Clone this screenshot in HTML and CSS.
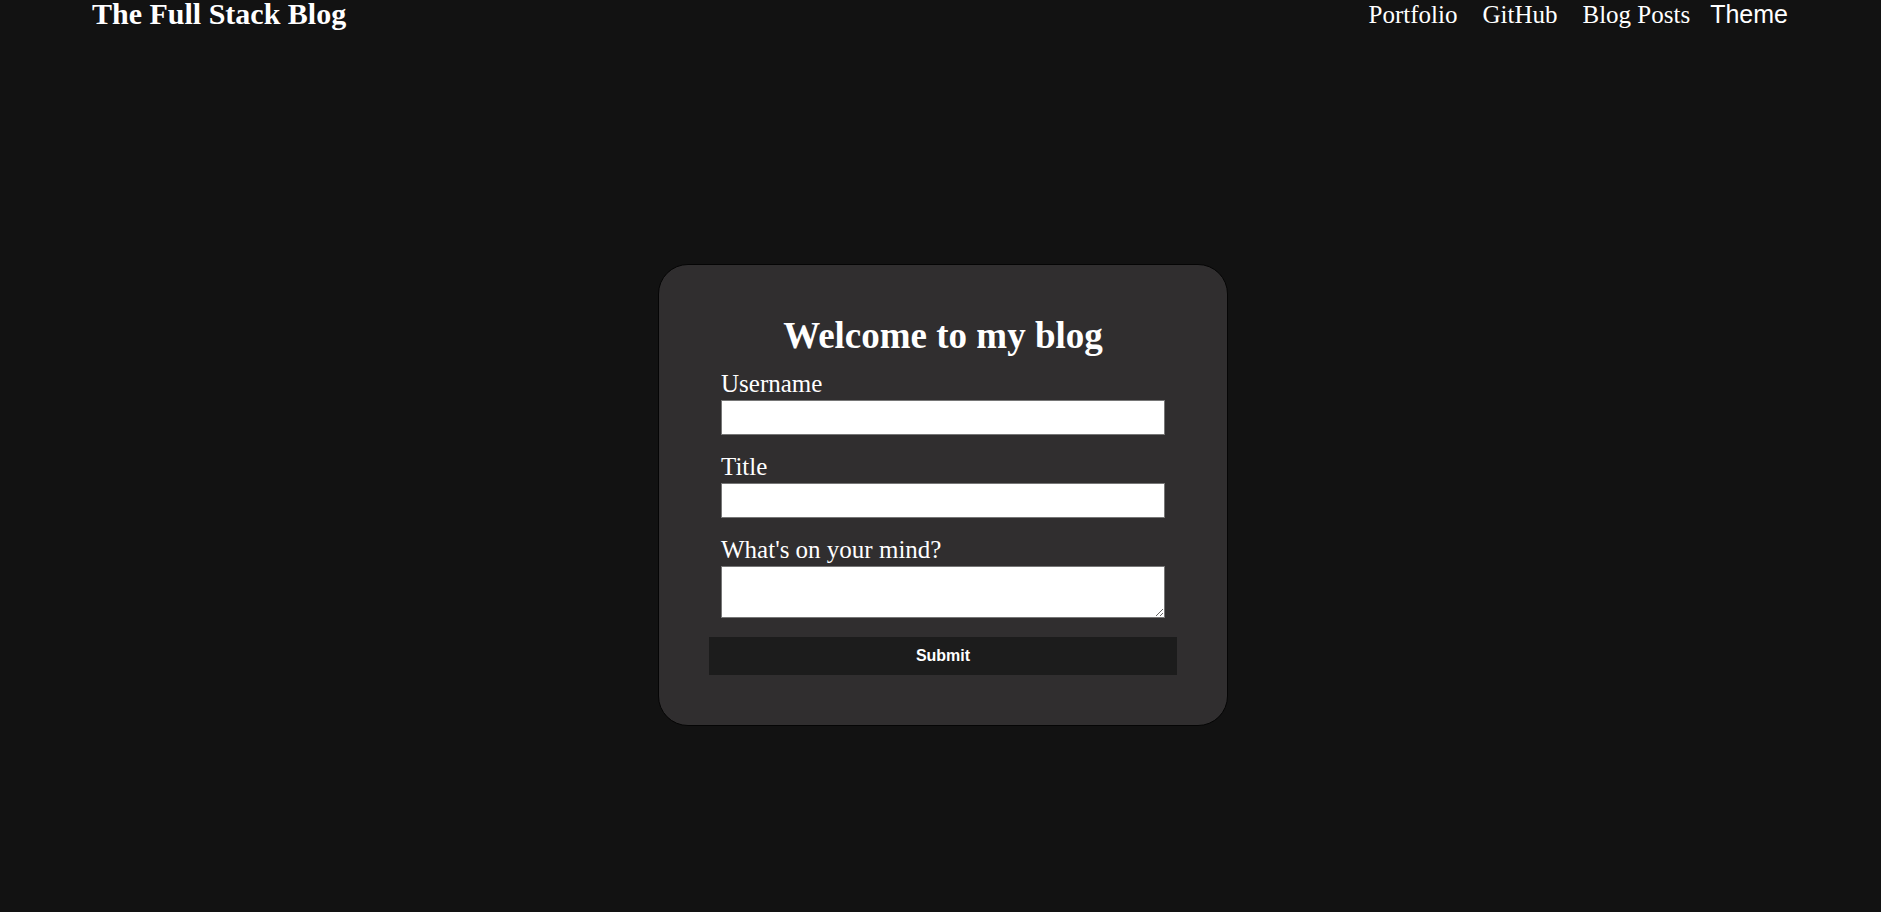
FILE: index.html
```html
<!DOCTYPE html>
<html lang="en">
<head>
<meta charset="utf-8">
<title>The Full Stack Blog</title>
<link rel="stylesheet" href="styles.css">
</head>
<body>
<header class="site-header">
  <div class="brand">The Full Stack Blog</div>
  <nav class="nav">
    <div class="nav-links">
      <a class="nav-link" href="#">Portfolio</a>
      <a class="nav-link" href="#">GitHub</a>
      <a class="nav-link" href="#">Blog Posts</a>
    </div>
    <button class="theme-btn" type="button">Theme</button>
  </nav>
</header>
<main class="main">
  <section class="card">
    <h2 class="card-title">Welcome to my blog</h2>
    <form class="form">
      <div class="field">
        <label class="field-label" for="username">Username</label>
        <input class="field-input" id="username" type="text">
      </div>
      <div class="field">
        <label class="field-label" for="title">Title</label>
        <input class="field-input" id="title" type="text">
      </div>
      <div class="field">
        <label class="field-label" for="content">What's on your mind?</label>
        <textarea class="field-textarea" id="content"></textarea>
      </div>
      <button class="submit-btn" type="submit">Submit</button>
    </form>
  </section>
</main>
</body>
</html>
```

FILE: styles.css
```css
html, body {
  margin: 0;
  padding: 0;
}

body {
  background: #121212;
  color: #ffffff;
  font-family: "Liberation Serif", "Times New Roman", serif;
  min-height: 912px;
}

.site-header {
  display: flex;
  justify-content: space-between;
  align-items: flex-start;
  padding: 0 93px 0 92px;
  height: 30px;
}

.brand {
  font-size: 30px;
  font-weight: bold;
  line-height: 28px;
}

.nav {
  display: flex;
  align-items: baseline;
  gap: 20px;
}

.nav-links {
  display: flex;
  gap: 25px;
}

.nav-link {
  color: #ffffff;
  text-decoration: none;
  font-size: 25px;
}

.theme-btn {
  background: transparent;
  border: none;
  padding: 0;
  margin: 0;
  color: #ffffff;
  font-family: "Liberation Sans", Arial, sans-serif;
  font-size: 25px;
}

.main {
  display: flex;
  justify-content: center;
  padding: 234px 0 0 5px;
}

.card {
  box-sizing: border-box;
  width: 570px;
  background: #302e2f;
  border: 1px solid #050505;
  border-radius: 30px;
  padding: 49px 50px 50px;
}

.card-title {
  margin: 0;
  text-align: center;
  font-size: 37px;
  font-weight: bold;
}

.form {
  display: flex;
  flex-direction: column;
  margin-top: 13px;
}

.field {
  display: flex;
  flex-direction: column;
  padding: 0 12px;
  margin-bottom: 18px;
}

.field-label {
  font-size: 25px;
  margin-bottom: 2px;
}

.field-input,
.field-textarea {
  box-sizing: border-box;
  width: 100%;
  margin: 0;
  background: #ffffff;
  border: 1px solid #767676;
  border-radius: 0;
  padding: 1px 2px;
  font-family: "Liberation Sans", Arial, sans-serif;
  font-size: 13px;
}

.field-input {
  height: 35px;
}

.field-textarea {
  height: 52px;
  resize: both;
}

.field:last-of-type {
  margin-bottom: 19px;
}

.submit-btn {
  height: 38px;
  background: #1c1c1c;
  color: #ffffff;
  border: none;
  border-radius: 0;
  font-family: "Liberation Sans", Arial, sans-serif;
  font-size: 16px;
  font-weight: bold;
  cursor: pointer;
}
```
